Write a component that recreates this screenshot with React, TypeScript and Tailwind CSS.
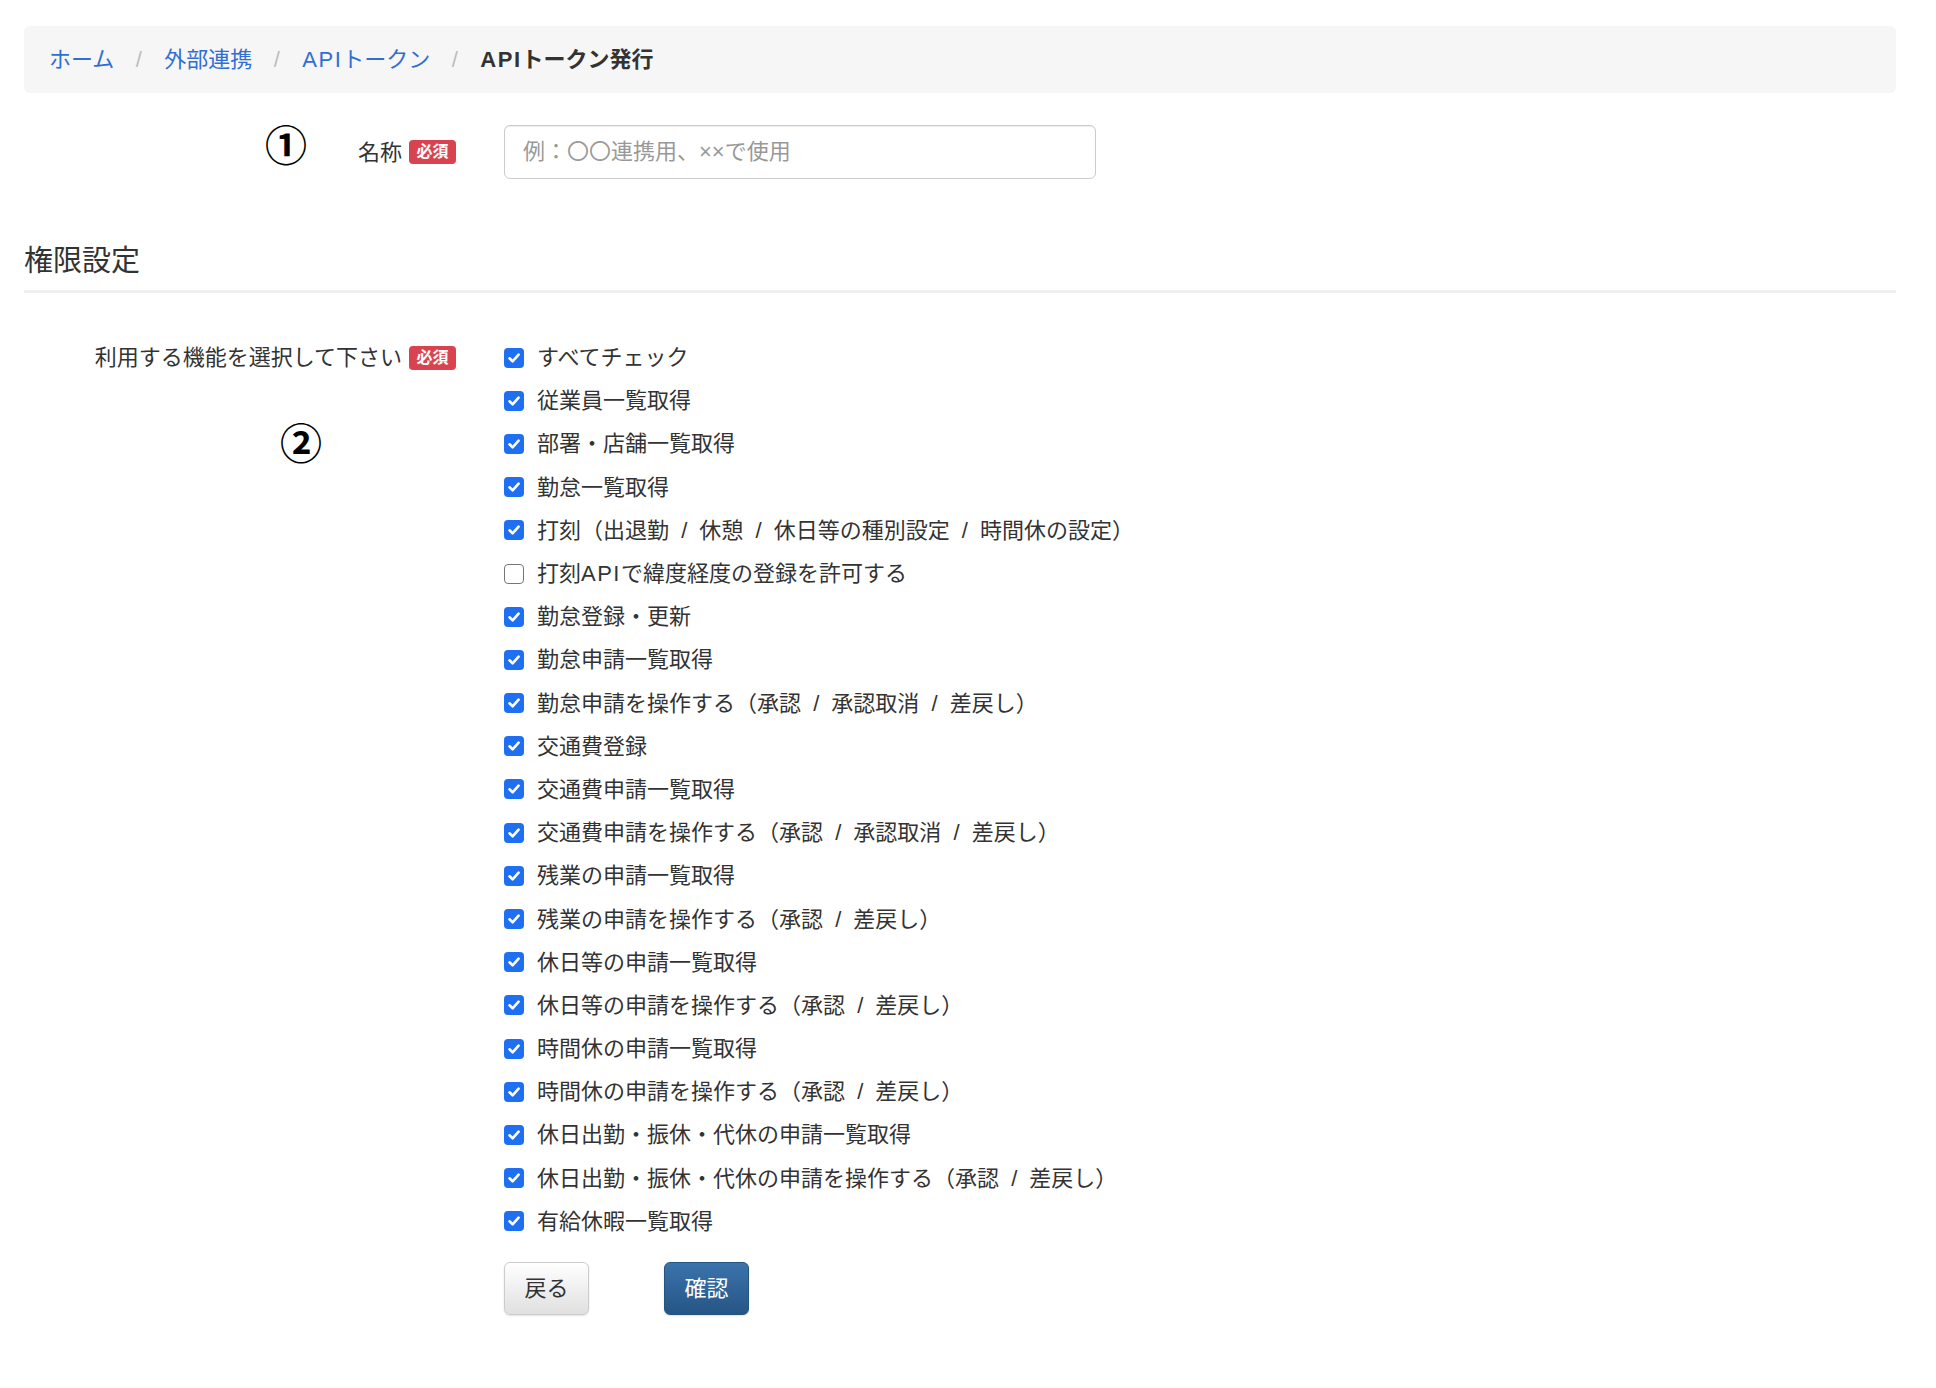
import React from "react";

const items: { label: string; checked: boolean }[] = [
  { label: "すべてチェック", checked: true },
  { label: "従業員一覧取得", checked: true },
  { label: "部署・店舗一覧取得", checked: true },
  { label: "勤怠一覧取得", checked: true },
  { label: "打刻（出退勤 / 休憩 / 休日等の種別設定 / 時間休の設定）", checked: true },
  { label: "打刻APIで緯度経度の登録を許可する", checked: false },
  { label: "勤怠登録・更新", checked: true },
  { label: "勤怠申請一覧取得", checked: true },
  { label: "勤怠申請を操作する（承認 / 承認取消 / 差戻し）", checked: true },
  { label: "交通費登録", checked: true },
  { label: "交通費申請一覧取得", checked: true },
  { label: "交通費申請を操作する（承認 / 承認取消 / 差戻し）", checked: true },
  { label: "残業の申請一覧取得", checked: true },
  { label: "残業の申請を操作する（承認 / 差戻し）", checked: true },
  { label: "休日等の申請一覧取得", checked: true },
  { label: "休日等の申請を操作する（承認 / 差戻し）", checked: true },
  { label: "時間休の申請一覧取得", checked: true },
  { label: "時間休の申請を操作する（承認 / 差戻し）", checked: true },
  { label: "休日出勤・振休・代休の申請一覧取得", checked: true },
  { label: "休日出勤・振休・代休の申請を操作する（承認 / 差戻し）", checked: true },
  { label: "有給休暇一覧取得", checked: true },
];

function Badge() {
  return (
    <span className="ml-[7px] inline-flex h-[24px] w-[47px] items-center justify-center rounded-[4px] bg-[#d9434f] text-[16px] font-bold leading-none text-white">
      必須
    </span>
  );
}

function Check({ checked }: { checked: boolean }) {
  if (checked) {
    return (
      <span className="flex h-[20px] w-[20px] shrink-0 items-center justify-center rounded-[4px] bg-[#1f6ff2]">
        <svg width="14" height="14" viewBox="0 0 14 14" fill="none">
          <path d="M2.5 7.3 L5.6 10.3 L11.6 3.6" stroke="white" strokeWidth="2.6" strokeLinecap="round" strokeLinejoin="round" />
        </svg>
      </span>
    );
  }
  return <span className="h-[20px] w-[20px] shrink-0 rounded-[4px] border-[1.5px] border-[#767676] bg-white" />;
}

function WithApi({ text }: { text: string }) {
  const parts = text.split("API");
  return (
    <>
      {parts.map((p, i) => (
        <React.Fragment key={i}>
          {i > 0 && <span className="tracking-[1.5px]">API</span>}
          {p}
        </React.Fragment>
      ))}
    </>
  );
}

function Label({ text }: { text: string }) {
  const parts = text.split(" / ");
  return (
    <span>
      {parts.map((p, i) => (
        <React.Fragment key={i}>
          {i > 0 && <span className="mx-[6px]"> / </span>}
          <WithApi text={p} />
        </React.Fragment>
      ))}
    </span>
  );
}

function Sep() {
  return <span className="ml-[20px] mr-[21px] inline-block w-[9px] text-center text-[#bdbdbd]">/</span>;
}

export default function App() {
  return (
    <div className="relative min-h-screen bg-white pl-[24px] pr-[40px] pt-[26px] font-['Liberation_Sans','Noto_Sans_CJK_JP',sans-serif] text-[#333333]">
      {/* Breadcrumb */}
      <nav className="flex h-[67px] items-center rounded-[6px] bg-[#f6f6f6] px-[25px] text-[22px]">
        <a className="text-[#2f6fd4]">ホーム</a>
        <Sep />
        <a className="text-[#2f6fd4]">外部連携</a>
        <Sep />
        <a className="text-[#2f6fd4]">
          <WithApi text="APIトークン" />
        </a>
        <Sep />
        <span className="font-bold text-[#333333]">
          <WithApi text="APIトークン発行" />
        </span>
      </nav>

      {/* Name row */}
      <div className="mt-[32px] flex">
        <div className="flex h-[54px] w-[456px] items-center justify-end pr-[24px] text-[22px]">
          <span>名称</span>
          <Badge />
        </div>
        <div className="ml-[24px] w-[592px]">
          <input
            type="text"
            placeholder="例：〇〇連携用、××で使用"
            className="h-[54px] w-full rounded-[6px] border-[1.5px] border-[#cccccc] bg-white px-[18px] text-[22px] shadow-[inset_0_1px_1px_rgba(0,0,0,0.075)] outline-none placeholder:text-[#999999]"
          />
        </div>
      </div>

      {/* Section header */}
      <div className="mt-[65px] border-b-[3px] border-[#efefef] pb-[11px]">
        <h2 className="text-[29px] font-normal leading-[35px] text-[#333333]">権限設定</h2>
      </div>

      {/* Permissions */}
      <div className="mt-[43px] flex">
        <div className="w-[456px] pr-[24px]">
          <div className="flex h-[43.2px] items-center justify-end text-[22px]">
            <span>利用する機能を選択して下さい</span>
            <Badge />
          </div>
        </div>
        <div className="ml-[24px] flex flex-col">
          {items.map((it) => (
            <label key={it.label} className="flex h-[43.2px] items-center gap-[13px] text-[22px] text-[#333333]">
              <Check checked={it.checked} />
              <Label text={it.label} />
            </label>
          ))}
          <div className="mt-[19px] flex gap-[75px]">
            <button className="flex h-[53px] w-[85px] items-center justify-center rounded-[6px] border-[1.5px] border-[#cccccc] bg-gradient-to-b from-white to-[#e0e0e0] text-[22px] text-[#333333] shadow-[0_1px_2px_rgba(0,0,0,0.12)]">
              戻る
            </button>
            <button className="flex h-[53px] w-[85px] items-center justify-center rounded-[6px] border-[1.5px] border-[#245580] bg-gradient-to-b from-[#3a74ab] to-[#265586] text-[22px] text-white shadow-[0_1px_2px_rgba(0,0,0,0.12)]">
              確認
            </button>
          </div>
        </div>
      </div>

      <div className="h-[70px]" />

      {/* Annotations */}
      <span className="absolute left-[265px] top-[122px] text-[42px] font-bold leading-none text-black font-['Noto_Sans_CJK_JP',sans-serif]">①</span>
      <span className="absolute left-[280px] top-[420px] text-[42px] font-bold leading-none text-black font-['Noto_Sans_CJK_JP',sans-serif]">②</span>
    </div>
  );
}
